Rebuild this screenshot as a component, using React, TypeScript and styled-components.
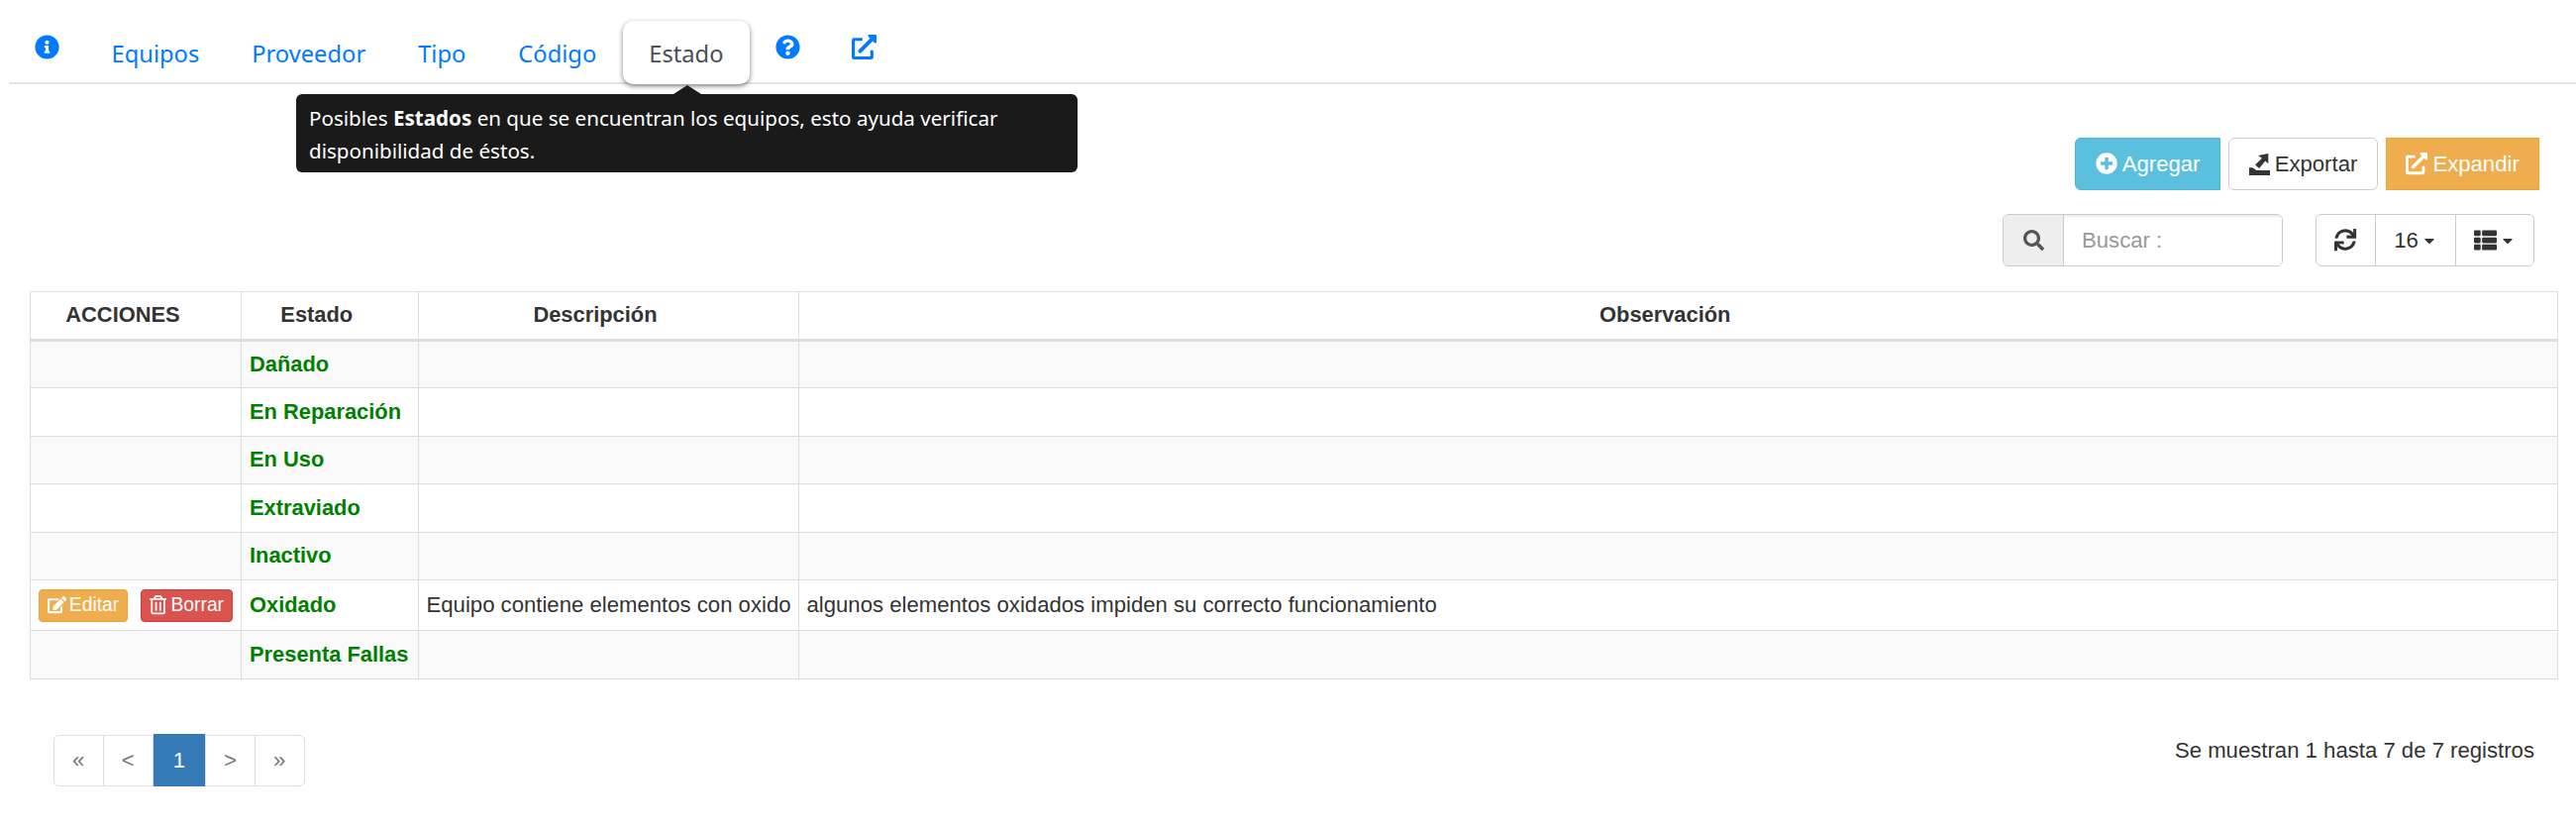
import React from "react";
import styled, { createGlobalStyle } from "styled-components";
import {
  FaCaretDown,
  FaEdit,
  FaExternalLinkAlt,
  FaInfoCircle,
  FaPlusCircle,
  FaQuestionCircle,
  FaRegTrashAlt,
  FaSearch,
  FaSync,
  FaThList,
} from "react-icons/fa";

const GlobalStyle = createGlobalStyle`
  body {
    margin: 0;
    background: #fff;
    color: #333;
    font-family: "Liberation Sans", Arial, sans-serif;
    font-size: 22.15px;
  }
`;

const Page = styled.div`
  width: 2601px;
  height: 837px;
  overflow: hidden;
`;

const TabBar = styled.nav`
  position: relative;
  display: flex;
  align-items: flex-start;
  height: 83px;
  margin-left: 9px;
  border-bottom: 2px solid #e3e6e9;
`;

const Tab = styled.a<{ $active?: boolean }>`
  height: 64px;
  margin-top: 21px;
  padding: 2px 26.5px 0;
  box-sizing: border-box;
  display: flex;
  align-items: center;
  font-family: "Noto Sans", sans-serif;
  font-size: 23.7px;
  color: ${({ $active }) => ($active ? "#495057" : "#007bff")};
  background: ${({ $active }) => ($active ? "#fff" : "transparent")};
  border-radius: ${({ $active }) => ($active ? "10px" : "0")};
  box-shadow: ${({ $active }) =>
    $active ? "0 2px 5px rgba(0, 0, 0, 0.5)" : "none"};
  position: relative;
  z-index: 1;
`;

const IconTab = styled.a`
  padding: 35px 26px 0;
  color: #007bff;
  font-size: 25px;
  line-height: 0;
`;

const Tooltip = styled.div`
  position: absolute;
  left: 290px;
  top: 95px;
  width: 789px;
  height: 79px;
  box-sizing: border-box;
  padding: 8px 13px;
  background: #1a1a1a;
  border-radius: 6px;
  color: #fff;
  font-family: "Noto Sans", sans-serif;
  font-size: 20.6px;
  line-height: 33px;
  z-index: 2;

  &::before {
    content: "";
    position: absolute;
    left: 381px;
    top: -9px;
    border-left: 14px solid transparent;
    border-right: 14px solid transparent;
    border-bottom: 9px solid #1a1a1a;
  }
`;

const ActionRow = styled.div`
  display: flex;
  justify-content: flex-end;
  gap: 8px;
  height: 53px;
  margin-top: 54px;
  padding-right: 37px;
`;

const ActionButton = styled.button<{
  $bg: string;
  $fg: string;
  $line: string;
  $radius: string;
  $width: number;
}>`
  display: flex;
  align-items: center;
  justify-content: center;
  gap: 5px;
  width: ${({ $width }) => $width}px;
  padding: 0;
  font: inherit;
  color: ${({ $fg }) => $fg};
  background: ${({ $bg }) => $bg};
  border: 1.5px solid ${({ $line }) => $line};
  border-radius: ${({ $radius }) => $radius};
`;

const ToolRow = styled.div`
  display: flex;
  justify-content: flex-end;
  gap: 33px;
  height: 53px;
  margin-top: 24px;
  padding-right: 42px;
`;

const SearchBox = styled.div`
  display: flex;
  width: 283px;
  border: 1.5px solid #ccc;
  border-radius: 6px;
  overflow: hidden;
  box-sizing: border-box;
`;

const SearchAddon = styled.span`
  width: 60px;
  display: flex;
  align-items: center;
  justify-content: center;
  background: #eee;
  border-right: 1.5px solid #ccc;
  color: #555;
  font-size: 21px;
`;

const SearchInput = styled.input`
  flex: 1;
  min-width: 0;
  padding: 0 18px;
  border: 0;
  outline: 0;
  font: inherit;
  color: #555;
  box-shadow: inset 0 2px 2px rgba(0, 0, 0, 0.075);

  &::placeholder {
    color: #999;
  }
`;

const ToolGroup = styled.div`
  display: flex;
  width: 221px;
  box-sizing: border-box;
  border: 1.5px solid #ccc;
  border-radius: 6px;
`;

const ToolButton = styled.button<{ $width: number }>`
  width: ${({ $width }) => $width}px;
  display: flex;
  align-items: center;
  justify-content: center;
  gap: 3px;
  padding: 0;
  background: none;
  border: 0;
  border-right: 1.5px solid #ccc;
  font: inherit;
  color: #333;

  &:last-child {
    border-right: 0;
  }
`;

const ListIcon = styled(FaThList)`
  font-size: 23px;
`;

const Caret = styled(FaCaretDown)`
  font-size: 16px;
`;

const DataTable = styled.table`
  width: 2553px;
  margin: 25px 0 0 30px;
  border-collapse: collapse;
  table-layout: fixed;

  th,
  td {
    padding: 0 8px;
    border: 1.5px solid #ddd;
    vertical-align: middle;
    white-space: nowrap;
  }

  th {
    height: 46.5px;
    padding-right: 34px;
    border-bottom-width: 3px;
    text-align: center;
    font-size: 21.875px;
    font-weight: bold;
  }
`;

const Row = styled.tr<{ $striped: boolean; $height: number }>`
  height: ${({ $height }) => $height}px;
  background: ${({ $striped }) => ($striped ? "#f9f9f9" : "#fff")};
`;

const StateName = styled.td`
  font-size: 21.875px;
  font-weight: bold;
  color: #008000;
`;

const RowActions = styled.div`
  display: flex;
  gap: 13px;
`;

const RowButton = styled.button<{ $bg: string; $line: string }>`
  display: flex;
  align-items: center;
  gap: 3px;
  height: 33px;
  padding: 0 7.5px;
  font: inherit;
  font-size: 19.3px;
  color: #fff;
  background: ${({ $bg }) => $bg};
  border: 1.5px solid ${({ $line }) => $line};
  border-radius: 4px;
`;

const Footer = styled.div`
  display: flex;
  justify-content: space-between;
  align-items: flex-start;
  margin-top: 56px;
  padding: 0 42px 0 54px;
`;

const Pager = styled.div`
  display: flex;
  height: 52px;
  box-sizing: border-box;
  border: 1.5px solid #ddd;
  border-radius: 6px;
`;

const PageLink = styled.a<{ $active?: boolean; $width: number }>`
  width: ${({ $width }) => $width}px;
  display: flex;
  align-items: center;
  justify-content: center;
  color: ${({ $active }) => ($active ? "#fff" : "#777")};
  background: ${({ $active }) => ($active ? "#337ab7" : "transparent")};
  border-right: 1.5px solid #ddd;
  margin: ${({ $active }) => ($active ? "-1.5px 0" : "0")};

  &:last-child {
    border-right: 0;
  }
`;

const Summary = styled.div`
  margin-top: 3.5px;
`;

const rows = [
  { name: "Dañado" },
  { name: "En Reparación" },
  { name: "En Uso" },
  { name: "Extraviado" },
  { name: "Inactivo" },
  {
    name: "Oxidado",
    description: "Equipo contiene elementos con oxido",
    note: "algunos elementos oxidados impiden su correcto funcionamiento",
    editable: true,
  },
  { name: "Presenta Fallas" },
];

const ExportIcon = () => (
  <svg width="21" height="22" viewBox="0 0 62 65" fill="currentColor">
    <path d="M0 65V42h10l12 8h40v15z" />
    <path d="M57 0v30l-9-8-18 22-12-10 20-20-11-8z" />
  </svg>
);

const App: React.FC = () => {
  return (
    <Page>
      <GlobalStyle />
      <TabBar>
        <IconTab>
          <FaInfoCircle />
        </IconTab>
        <Tab>Equipos</Tab>
        <Tab>Proveedor</Tab>
        <Tab>Tipo</Tab>
        <Tab>Código</Tab>
        <Tab $active>Estado</Tab>
        <IconTab>
          <FaQuestionCircle />
        </IconTab>
        <IconTab>
          <FaExternalLinkAlt />
        </IconTab>
        <Tooltip>
          Posibles <b>Estados</b> en que se encuentran los equipos, esto ayuda
          verificar
          <br />
          disponibilidad de éstos.
        </Tooltip>
      </TabBar>

      <ActionRow>
        <ActionButton
          $bg="#5bc0de"
          $fg="#fff"
          $line="#46b8da"
          $radius="6px 0 0 6px"
          $width={147}
        >
          <FaPlusCircle /> Agregar
        </ActionButton>
        <ActionButton $bg="#fff" $fg="#333" $line="#ccc" $radius="6px" $width={151}>
          <ExportIcon /> Exportar
        </ActionButton>
        <ActionButton $bg="#f0ad4e" $fg="#fff" $line="#eea236" $radius="0" $width={155}>
          <FaExternalLinkAlt /> Expandir
        </ActionButton>
      </ActionRow>

      <ToolRow>
        <SearchBox>
          <SearchAddon>
            <FaSearch />
          </SearchAddon>
          <SearchInput placeholder="Buscar :" />
        </SearchBox>
        <ToolGroup>
          <ToolButton $width={60}>
            <FaSync />
          </ToolButton>
          <ToolButton $width={81}>
            16 <Caret />
          </ToolButton>
          <ToolButton $width={77}>
            <ListIcon /> <Caret />
          </ToolButton>
        </ToolGroup>
      </ToolRow>

      <DataTable>
        <colgroup>
          <col style={{ width: 213 }} />
          <col style={{ width: 178.5 }} />
          <col style={{ width: 384 }} />
          <col />
        </colgroup>
        <thead>
          <tr>
            <th>ACCIONES</th>
            <th>Estado</th>
            <th>Descripción</th>
            <th>Observación</th>
          </tr>
        </thead>
        <tbody>
          {rows.map((row, index) => (
            <Row
              key={row.name}
              $striped={index % 2 === 0}
              $height={row.editable ? 51 : 48.5}
            >
              <td>
                {row.editable && (
                  <RowActions>
                    <RowButton $bg="#f0ad4e" $line="#eea236">
                      <FaEdit /> Editar
                    </RowButton>
                    <RowButton $bg="#d9534f" $line="#d43f3a">
                      <FaRegTrashAlt /> Borrar
                    </RowButton>
                  </RowActions>
                )}
              </td>
              <StateName>{row.name}</StateName>
              <td>{row.description}</td>
              <td>{row.note}</td>
            </Row>
          ))}
        </tbody>
      </DataTable>

      <Footer>
        <Pager>
          <PageLink $width={48.5}>«</PageLink>
          <PageLink $width={49.5}>&lt;</PageLink>
          <PageLink $width={52} $active>
            1
          </PageLink>
          <PageLink $width={49}>&gt;</PageLink>
          <PageLink $width={48.5}>»</PageLink>
        </Pager>
        <Summary>Se muestran 1 hasta 7 de 7 registros</Summary>
      </Footer>
    </Page>
  );
};

export default App;
